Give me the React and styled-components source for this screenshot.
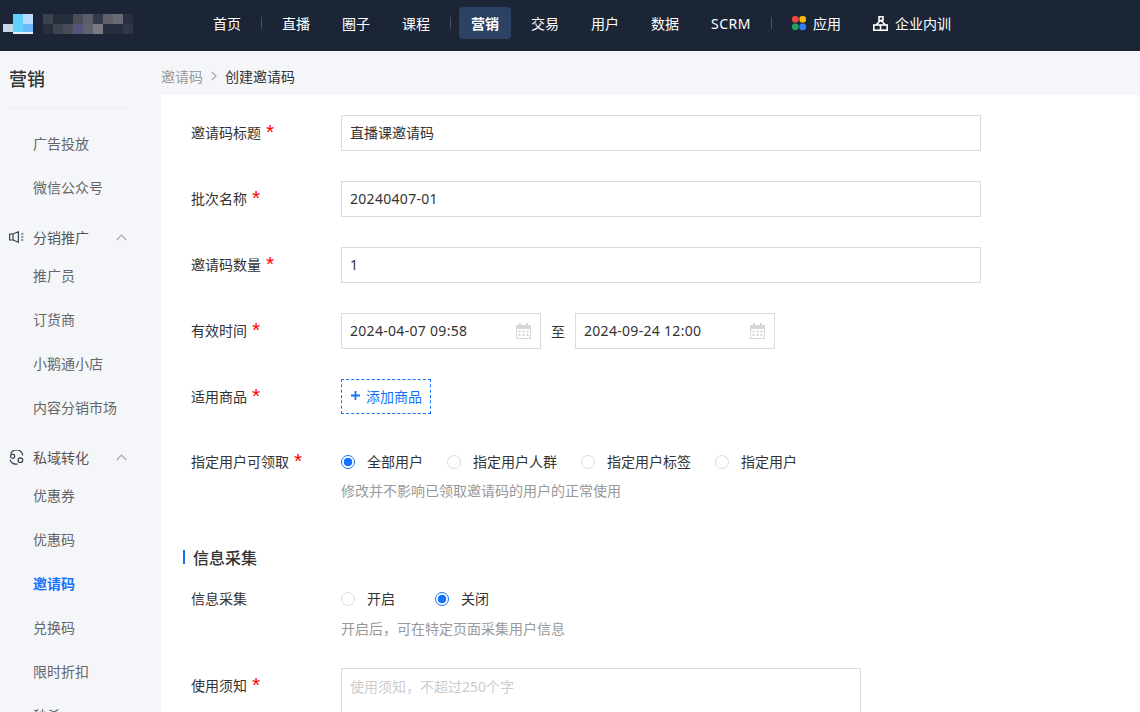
import React from 'react';
import styled, {createGlobalStyle} from 'styled-components';

const FONT = '"Noto Sans", "Noto Sans CJK SC", sans-serif';

const GlobalStyle = createGlobalStyle`
  html, body { margin: 0; padding: 0; height: 100%; overflow: hidden; }
  body { font-family: ${FONT}; font-size: 14px; color: #333; background: #fff; }
  * { box-sizing: border-box; }
`;

const Page = styled.div`
  width: 1140px;
  height: 712px;
  overflow: hidden;
  display: flex;
  flex-direction: column;
`;
const Header = styled.header`
  flex: none;
  height: 51px;
  background: #1c2536;
  display: flex;
  align-items: flex-start;
`;
const LogoBox = styled.div`
  width: 201px;
  height: 51px;
  flex: none;
`;
const Nav = styled.nav`
  display: flex;
  align-items: center;
  gap: 8px;
  padding-top: 7px;
`;
const NavItem = styled.a`
  display: flex;
  align-items: center;
  gap: 7px;
  height: 32px;
  padding: 0 12px;
  border-radius: 4px;
  font-size: 14px;
  color: #fff;
  letter-spacing: ${p => (p.$latin ? '0.5px' : '0')};
  font-weight: ${p => (p.$active ? 700 : 400)};
  background: ${p => (p.$active ? '#2c4264' : 'transparent')};
`;
const NavSep = styled.i`
  width: 1px;
  height: 12px;
  background: #4a5364;
`;
const Body = styled.div`
  flex: 1;
  display: flex;
  min-height: 0;
`;
const Side = styled.aside`
  flex: none;
  width: 161px;
  background: #f5f6fa;
  padding: 0 0 0 8px;
`;
const SideTitle = styled.div`
  width: 120px;
  height: 57px;
  line-height: 56px;
  font-size: 18px;
  font-weight: 500;
  color: #333;
  padding-left: 1px;
  border-bottom: 1px solid #ebedf0;
  margin-bottom: 14px;
`;
const SideItem = styled.div`
  height: 44px;
  line-height: 44px;
  padding-left: 25px;
  font-size: 14px;
  color: ${p => (p.$active ? '#1472ff' : '#666')};
  font-weight: ${p => (p.$active ? 700 : 400)};
`;
const SideGroup = styled.div`
  height: 32px;
  margin-top: 12px;
  padding-bottom: 2px;
  display: flex;
  align-items: center;
  color: #555;
`;
const GroupIcon = styled.span`
  width: 25px;
  height: 16px;
  padding-left: 1px;
  display: flex;
  align-items: center;
`;
const GroupName = styled.span`
  width: 83px;
`;
const Main = styled.main`
  flex: 1;
  min-width: 0;
  display: flex;
  flex-direction: column;
`;
const Crumbs = styled.div`
  flex: none;
  height: 44px;
  padding-top: 6px;
  background: #f5f6fa;
  display: flex;
  align-items: center;
  gap: 8px;
  color: #333;
`;
const CrumbLink = styled.span`
  color: #999;
`;
const Form = styled.div`
  flex: 1;
  background: #fff;
  padding: 20px 0 0 30px;
`;
const Row = styled.div`
  display: flex;
  margin-bottom: ${p => p.$mb ?? 30}px;
`;
const Label = styled.div`
  width: 150px;
  flex: none;
  height: ${p => p.$h ?? 36}px;
  padding-bottom: 2px;
  display: flex;
  align-items: center;
  gap: 5px;
  color: #333;
`;
const Star = styled.span`
  color: #f00;
  font-size: 21px;
  font-family: "Liberation Sans", sans-serif;
  line-height: 18px;
  height: 18px;
`;
const Input = styled.div`
  width: ${p => p.$w ?? 640}px;
  height: 36px;
  padding: 0 9px 2px 8px;
  display: flex;
  align-items: center;
  justify-content: space-between;
  border: 1px solid #dcdcdc;
  color: #333;
  background: #fff;
  letter-spacing: ${p => (p.$latin ? '0.3px' : '0')};
`;
const CalendarSvg = styled.svg`
  flex: none;
  margin-bottom: -2px;
`;
const DateRow = styled.div`
  display: flex;
  align-items: center;
  gap: 10px;
`;
const AddBtn = styled.div`
  width: 90px;
  height: 35px;
  border: 1px dashed #1472ff;
  color: #1472ff;
  display: flex;
  align-items: center;
  padding: 0 0 2px 9px;
  gap: 6px;
`;
const RadioGroup = styled.div`
  display: flex;
  align-items: center;
  height: 34px;
  gap: ${p => p.$gap}px;
`;
const RadioItem = styled.label`
  display: flex;
  align-items: center;
  gap: 12px;
  color: #333;
`;
const RadioText = styled.span`
  padding-bottom: 2px;
`;
const RadioDot = styled.span`
  width: 14px;
  height: 14px;
  border-radius: 50%;
  border: 1px solid ${p => (p.$on ? '#1472ff' : '#dcdcdc')};
  background: ${p => (p.$on ? 'radial-gradient(circle, #1472ff 0 4px, #fff 4.6px)' : '#fff')};
`;
const Help = styled.div`
  height: 20px;
  line-height: 20px;
  margin-top: ${p => p.$mt ?? 2}px;
  color: #999;
`;
const SectionTitle = styled.h3`
  margin: 0 0 13px -8px;
  height: 24px;
  display: flex;
  align-items: center;
  gap: 8px;
  font-size: 16px;
  font-weight: 500;
  color: #333;
  &::before {
    content: '';
    width: 2px;
    height: 14px;
    background: #1472ff;
  }
`;
const TextArea = styled.div`
  width: 520px;
  height: 120px;
  border: 1px solid #dcdcdc;
  padding: 8px;
  line-height: 20px;
  color: #ccc;
`;

const LOGO = [
  [43, 14, '#3d424e'], [53, 14, '#262d3c'], [63, 14, '#262d3c'], [73, 14, '#4a4d58'], [83, 14, '#5b5d68'], [93, 14, '#34394a'], [103, 14, '#5f606a'], [113, 14, '#686a74'], [123, 14, '#2a3040'],
  [43, 24, '#262d3c'], [53, 24, '#3d424e'], [63, 24, '#494c58'], [73, 24, '#54547a'], [83, 24, '#5f6070'], [93, 24, '#797a80'], [103, 24, '#262d3c'], [113, 24, '#262d3c'], [123, 24, '#30364a'],
];

function Logo() {
  return (
    <svg width="140" height="51" viewBox="0 0 140 51">
      <rect x="3" y="24" width="10" height="8" fill="#c5d6e6" />
      <rect x="13" y="14" width="10" height="20" fill="#5fd3fb" />
      <rect x="23" y="14" width="10" height="10" fill="#b7dcff" />
      <rect x="23" y="24" width="10" height="10" fill="#6fb7fb" />
      <rect x="13" y="32" width="20" height="2" fill="#e6eef6" />
      {LOGO.map(([x, y, c]) => <rect key={x + '-' + y} x={x} y={y} width="10" height="10" fill={c} />)}
    </svg>
  );
}
function AppsIcon() {
  return (
    <svg width="14" height="14" viewBox="0 0 14 14">
      <rect x="0" y="0" width="6.6" height="6.6" rx="2.8" fill="#f0453a" />
      <rect x="7.4" y="0" width="6.6" height="6.6" rx="2.8" fill="#fbbc05" />
      <rect x="0" y="7.4" width="6.6" height="6.6" rx="2.8" fill="#1fa463" />
      <rect x="7.4" y="7.4" width="6.6" height="6.6" rx="2.8" fill="#2f80f5" />
    </svg>
  );
}
function OrgIcon() {
  return (
    <svg width="15" height="15" viewBox="0 0 15 15" fill="none" stroke="#fff" strokeWidth="1.6">
      <rect x="6" y="0.8" width="4" height="3.6" />
      <path d="M7.5 4.5 L3 9 M8 4.5 L12.5 9" />
      <rect x="0.8" y="9" width="13.4" height="5.2" />
      <path d="M7.5 9 V14" />
    </svg>
  );
}
function SpeakerIcon() {
  return (
    <svg width="15" height="12" viewBox="0 0 15 12" fill="none" stroke="#33404f" strokeWidth="1.2">
      <path d="M0.6 3 H4 L9.4 0.8 V11.2 L4 9 H0.6 Z M4 3 V9" />
      <path d="M12 3 H14.4 M12 6 H14.4 M12 9 H14.4" />
    </svg>
  );
}
function SwapIcon() {
  return (
    <svg width="15" height="15" viewBox="0 0 15 15" fill="none" stroke="#33404f" strokeWidth="1.2">
      <path d="M1.6 3.8 A6.4 6.4 0 0 1 13.8 5.4" />
      <path d="M1 9.8 A6.4 6.4 0 0 0 8.6 14" />
      <circle cx="3.6" cy="6.2" r="2.1" />
      <circle cx="11.4" cy="10.2" r="2.3" />
    </svg>
  );
}
function Chevron() {
  return (
    <svg width="11" height="7" viewBox="0 0 11 7" fill="none" stroke="#a8abb2" strokeWidth="1.2">
      <path d="M0.8 6 L5.5 1.2 L10.2 6" />
    </svg>
  );
}
function CalendarIcon() {
  return (
    <CalendarSvg width="15" height="16" viewBox="0 0 15 16" fill="#d4d6da">
      <rect x="3" y="0" width="2" height="3" />
      <rect x="10" y="0" width="2" height="3" />
      <path fillRule="evenodd" d="M0 2 H15 V16 H0 Z M1 6 V15 H14 V6 Z" />
      <path d="M2.5 7.5 H4.5 V9.5 H2.5 Z M6.5 7.5 H8.5 V9.5 H6.5 Z M10.5 7.5 H12.5 V9.5 H10.5 Z M2.5 11 H4.5 V13 H2.5 Z M6.5 11 H8.5 V13 H6.5 Z M10.5 11 H12.5 V13 H10.5 Z" />
    </CalendarSvg>
  );
}
function CrumbArrow() {
  return (
    <svg width="6" height="10" viewBox="0 0 6 10" fill="none" stroke="#a8abb2" strokeWidth="1.2">
      <path d="M0.8 1 L5 5 L0.8 9" />
    </svg>
  );
}
function PlusIcon() {
  return (
    <svg width="9" height="9" viewBox="0 0 9 9" stroke="#1472ff" strokeWidth="1.8">
      <path d="M0 4.5 H9 M4.5 0 V9" />
    </svg>
  );
}

function Radio({on, children}) {
  return <RadioItem><RadioDot $on={on} /><RadioText>{children}</RadioText></RadioItem>;
}

export default function App() {
  return (
    <Page>
      <GlobalStyle />
      <Header>
        <LogoBox><Logo /></LogoBox>
        <Nav>
          <NavItem>首页</NavItem>
          <NavSep />
          <NavItem>直播</NavItem>
          <NavItem>圈子</NavItem>
          <NavItem>课程</NavItem>
          <NavSep />
          <NavItem $active>营销</NavItem>
          <NavItem>交易</NavItem>
          <NavItem>用户</NavItem>
          <NavItem>数据</NavItem>
          <NavItem $latin>SCRM</NavItem>
          <NavSep />
          <NavItem><AppsIcon />应用</NavItem>
          <NavItem><OrgIcon />企业内训</NavItem>
        </Nav>
      </Header>
      <Body>
        <Side>
          <SideTitle>营销</SideTitle>
          <SideItem>广告投放</SideItem>
          <SideItem>微信公众号</SideItem>
          <SideGroup><GroupIcon><SpeakerIcon /></GroupIcon><GroupName>分销推广</GroupName><Chevron /></SideGroup>
          <SideItem>推广员</SideItem>
          <SideItem>订货商</SideItem>
          <SideItem>小鹅通小店</SideItem>
          <SideItem>内容分销市场</SideItem>
          <SideGroup><GroupIcon><SwapIcon /></GroupIcon><GroupName>私域转化</GroupName><Chevron /></SideGroup>
          <SideItem>优惠券</SideItem>
          <SideItem>优惠码</SideItem>
          <SideItem $active>邀请码</SideItem>
          <SideItem>兑换码</SideItem>
          <SideItem>限时折扣</SideItem>
          <SideItem>秒杀</SideItem>
        </Side>
        <Main>
          <Crumbs><CrumbLink>邀请码</CrumbLink><CrumbArrow />创建邀请码</Crumbs>
          <Form>
            <Row><Label>邀请码标题<Star>*</Star></Label><Input>直播课邀请码</Input></Row>
            <Row><Label>批次名称<Star>*</Star></Label><Input $latin>20240407-01</Input></Row>
            <Row><Label>邀请码数量<Star>*</Star></Label><Input $latin>1</Input></Row>
            <Row>
              <Label>有效时间<Star>*</Star></Label>
              <DateRow>
                <Input $w={200} $latin>2024-04-07 09:58<CalendarIcon /></Input>
                至
                <Input $w={200} $latin>2024-09-24 12:00<CalendarIcon /></Input>
              </DateRow>
            </Row>
            <Row $mb={31}><Label $h={35}>适用商品<Star>*</Star></Label><AddBtn><PlusIcon />添加商品</AddBtn></Row>
            <Row $mb={44}>
              <Label $h={34}>指定用户可领取<Star>*</Star></Label>
              <div>
                <RadioGroup $gap={24}>
                  <Radio on>全部用户</Radio>
                  <Radio>指定用户人群</Radio>
                  <Radio>指定用户标签</Radio>
                  <Radio>指定用户</Radio>
                </RadioGroup>
                <Help>修改并不影响已领取邀请码的用户的正常使用</Help>
              </div>
            </Row>
            <SectionTitle>信息采集</SectionTitle>
            <Row $mb={29}>
              <Label $h={34}>信息采集</Label>
              <div>
                <RadioGroup $gap={40}>
                  <Radio>开启</Radio>
                  <Radio on>关闭</Radio>
                </RadioGroup>
                <Help $mt={3}>开启后，可在特定页面采集用户信息</Help>
              </div>
            </Row>
            <Row>
              <Label>使用须知<Star>*</Star></Label>
              <TextArea>使用须知，不超过250个字</TextArea>
            </Row>
          </Form>
        </Main>
      </Body>
    </Page>
  );
}
